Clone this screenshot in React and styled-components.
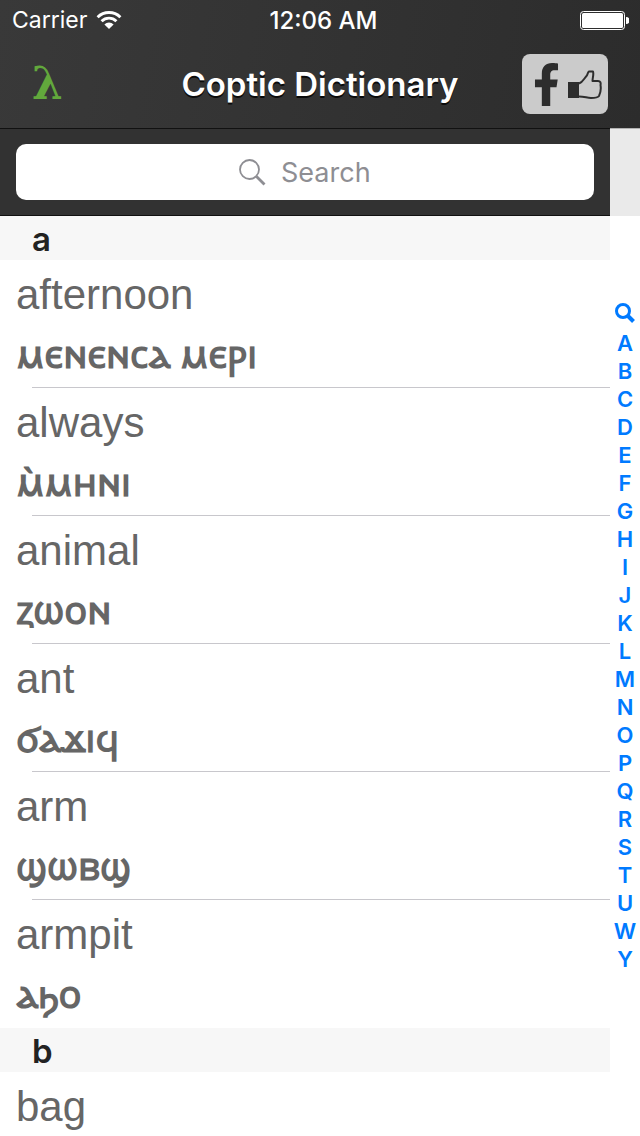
import React, { useState } from 'react';
import styled, { createGlobalStyle } from 'styled-components';
import { FaFacebookF } from 'react-icons/fa';

const SECTIONS = [
  {
    letter: 'a',
    words: [
      { english: 'afternoon', coptic: 'ⲙⲉⲛⲉⲛⲥⲁ ⲙⲉⲣⲓ' },
      { english: 'always', coptic: 'ⲙ̀ⲙⲏⲛⲓ' },
      { english: 'animal', coptic: 'ⲍⲱⲟⲛ' },
      { english: 'ant', coptic: 'ϭⲁϫⲓϥ' },
      { english: 'arm', coptic: 'ϣⲱⲃϣ' },
      { english: 'armpit', coptic: 'ⲁϧⲟ' },
    ],
  },
  {
    letter: 'b',
    words: [
      { english: 'bag' },
    ],
  },
];

const INDEX_LETTERS = 'ABCDEFGHIJKLMNOPQRSTUWY'.split('');

const WifiIcon = () => (
  <svg width="26" height="20" viewBox="0 0 26 20" aria-hidden="true">
    <path
      d="M1.6 7.2a16.2 16.2 0 0 1 22.8 0M5.6 11.2a10.5 10.5 0 0 1 14.8 0"
      fill="none"
      stroke="#fff"
      strokeWidth="2.9"
    />
    <path d="M13 19l-4.6-4.6a6.6 6.6 0 0 1 9.2 0z" fill="#fff" />
  </svg>
);

const BatteryIcon = () => (
  <svg width="49" height="19" viewBox="0 0 49 19" aria-hidden="true">
    <rect x="0.5" y="0.5" width="44" height="18" rx="3" fill="none" stroke="#fff" />
    <rect x="2" y="2" width="41" height="15" rx="1.5" fill="#fff" />
    <path d="M46 6a3.5 3.5 0 0 1 0 7z" fill="#fff" />
  </svg>
);

const ThumbIcon = () => (
  <svg width="34" height="32" viewBox="0 0 34 32" aria-hidden="true">
    <rect x="0" y="14" width="11" height="16" fill="#2d2d2d" />
    <path
      d="M11 15.500C15 14 16 10.500 18.500 8C20 6.500 19.500 4 21 3.500H25C26 6.500 24.500 9.500 24.500 13H30C32.500 13 33 15 32.500 17C33 20 32.500 25 31 28C29.500 30 26 30 23 30C19 30 16.500 28.500 11 28.500"
      fill="none"
      stroke="#2d2d2d"
      strokeWidth="2"
      strokeLinejoin="round"
    />
  </svg>
);

const SearchIcon = () => (
  <svg width="27" height="27" viewBox="0 0 27 27" aria-hidden="true">
    <circle cx="10.5" cy="10.5" r="9.500" fill="none" stroke="#8e8e93" strokeWidth="1.800" />
    <path d="M17.500 17.500l8 8" stroke="#8e8e93" strokeWidth="2.800" />
  </svg>
);

const IndexSearchIcon = () => (
  <svg width="20" height="20" viewBox="0 0 20 20" aria-hidden="true">
    <circle cx="8" cy="8" r="6.500" fill="none" stroke="#007aff" strokeWidth="3" />
    <path d="M12.500 12.500l6 6" stroke="#007aff" strokeWidth="4" />
  </svg>
);

const App = () => {
  const [query, setQuery] = useState('');

  const sections = SECTIONS
    .map(section => ({
      ...section,
      words: section.words.filter(word => word.english.includes(query.toLowerCase())),
    }))
    .filter(section => section.words.length > 0);

  return (
    <Root>
      <GlobalStyle />
      <Header>
        <StatusBar>
          <Carrier>
            Carrier
            <WifiIcon />
          </Carrier>
          <Clock>12:06 AM</Clock>
          <Battery>
            <BatteryIcon />
          </Battery>
        </StatusBar>
        <NavBar>
          <LogoButton type="button" aria-label="Switch language">λ</LogoButton>
          <Title>Coptic Dictionary</Title>
          <LikeButton type="button" aria-label="Like on Facebook">
            <FaFacebookF size={43} />
            <ThumbIcon />
          </LikeButton>
        </NavBar>
      </Header>
      <Content>
        <List>
          <SearchBar>
            <SearchField>
              <SearchIcon />
              <SearchInput
                id="search"
                type="text"
                aria-label="Search"
                placeholder="Search"
                value={query}
                onChange={e => setQuery(e.target.value)}
              />
            </SearchField>
          </SearchBar>
          {sections.map(({ letter, words }) => (
            <section key={letter} id={letter}>
              <SectionTitle>{letter}</SectionTitle>
              <Words>
                {words.map(({ english, coptic }) => (
                  <Word key={english}>
                    <English>{english}</English>
                    {coptic && <Coptic lang="cop">{coptic}</Coptic>}
                  </Word>
                ))}
              </Words>
            </section>
          ))}
        </List>
        <Side>
          <SideTop />
          <Index aria-label="Index">
            <IndexLink href="#search" aria-label="Search">
              <IndexSearchIcon />
            </IndexLink>
            {INDEX_LETTERS.map(letter => (
              <IndexLink key={letter} href={`#${letter.toLowerCase()}`}>{letter}</IndexLink>
            ))}
          </Index>
        </Side>
      </Content>
    </Root>
  );
};

export default App;

const GlobalStyle = createGlobalStyle`
  * {
    box-sizing: border-box;
  }
  body {
    margin: 0;
    background-color: #fff;
    font-family: Inter, Roboto, sans-serif;
  }
`;

const Root = styled.div`
  height: 100vh;
  display: flex;
  flex-direction: column;
  overflow: hidden;
`;

const Header = styled.header`
  flex: none;
  color: #fff;
  background: linear-gradient(100deg, #393939, #2c2c2c);
`;

const StatusBar = styled.div`
  height: 40px;
  padding: 0 11px 0 12px;
  display: grid;
  grid-template-columns: 1fr auto 1fr;
  align-items: center;
  font-size: 24px;
`;

const Carrier = styled.div`
  display: flex;
  align-items: center;
  gap: 9px;
  font-size: 23px;
`;

const Clock = styled.div`
  padding-left: 6px;
  font-weight: 500;
`;

const Battery = styled.div`
  display: flex;
  justify-content: flex-end;
`;

const NavBar = styled.div`
  height: 88px;
  padding: 0 32px;
  display: grid;
  grid-template-columns: 1fr auto 1fr;
  align-items: center;
`;

const LogoButton = styled.button`
  justify-self: start;
  padding: 0;
  border: 0;
  background: none;
  color: #62a83c;
  font-family: 'DejaVu Serif', serif;
  font-size: 44px;
  font-weight: 700;
  line-height: 56px;
`;

const Title = styled.h1`
  margin: 0;
  font-size: 33px;
  font-weight: 600;
  text-shadow: 0 2px 0 rgba(0, 0, 0, 0.8);
`;

const LikeButton = styled.button`
  justify-self: end;
  width: 86px;
  height: 60px;
  padding: 0 6px 0 3px;
  border: 0;
  border-radius: 8px;
  display: flex;
  align-items: center;
  justify-content: space-between;
  color: #2d2d2d;
  background-color: #cbcbcb;
`;

const Content = styled.main`
  flex: 1;
  min-height: 0;
  display: flex;
`;

const List = styled.div`
  flex: 1;
  min-width: 0;
  overflow-y: auto;
  scrollbar-width: none;
`;

const SearchBar = styled.div`
  height: 88px;
  padding: 15px 16px;
  border-top: 1px solid #111;
  border-bottom: 1px solid #111;
  background-color: #323232;
`;

const SearchField = styled.label`
  height: 56px;
  border-radius: 10px;
  display: flex;
  align-items: center;
  justify-content: center;
  gap: 15px;
  background-color: #fff;
`;

const SearchInput = styled.input`
  width: 90px;
  padding: 0;
  border: 0;
  outline: 0;
  background: none;
  color: #222;
  font-family: inherit;
  font-size: 27px;
  &::placeholder {
    color: #8e8e93;
    opacity: 1;
  }
`;

const SectionTitle = styled.h2`
  margin: 0;
  padding: 2px 32px 0;
  background-color: #f7f7f7;
  color: #222;
  font-size: 33px;
  font-weight: 600;
  line-height: 42px;
`;

const Words = styled.ul`
  margin: 0;
  padding: 0;
  list-style: none;
`;

const Word = styled.li`
  height: 128px;
  padding: 7px 16px 0;
  color: #666;
  /* separator starts at the text inset, the last row has none */
  &:not(:last-child) {
    background: linear-gradient(#c8c7cc, #c8c7cc) 32px 100% / 100% 1px no-repeat;
  }
`;

const English = styled.div`
  font-family: 'Liberation Sans', Arial, sans-serif;
  font-size: 42px;
  line-height: 56px;
`;

const Coptic = styled.div`
  font-family: 'Noto Sans Coptic', 'DejaVu Serif', 'DejaVu Sans', serif;
  font-size: 38px;
  font-weight: 700;
  line-height: 60px;
  white-space: nowrap;
`;

const Side = styled.div`
  flex: none;
  width: 30px;
`;

const SideTop = styled.div`
  height: 88px;
  border-top: 1px solid #b2b2b2;
  background-color: #eaeaea;
`;

const Index = styled.nav`
  padding-top: 81px;
  display: flex;
  flex-direction: column;
`;

const IndexLink = styled.a`
  height: 28px;
  display: flex;
  align-items: center;
  justify-content: center;
  color: #007aff;
  font-size: 22px;
  font-weight: 600;
  text-decoration: none;
  &:first-child {
    height: 32px;
  }
`;
